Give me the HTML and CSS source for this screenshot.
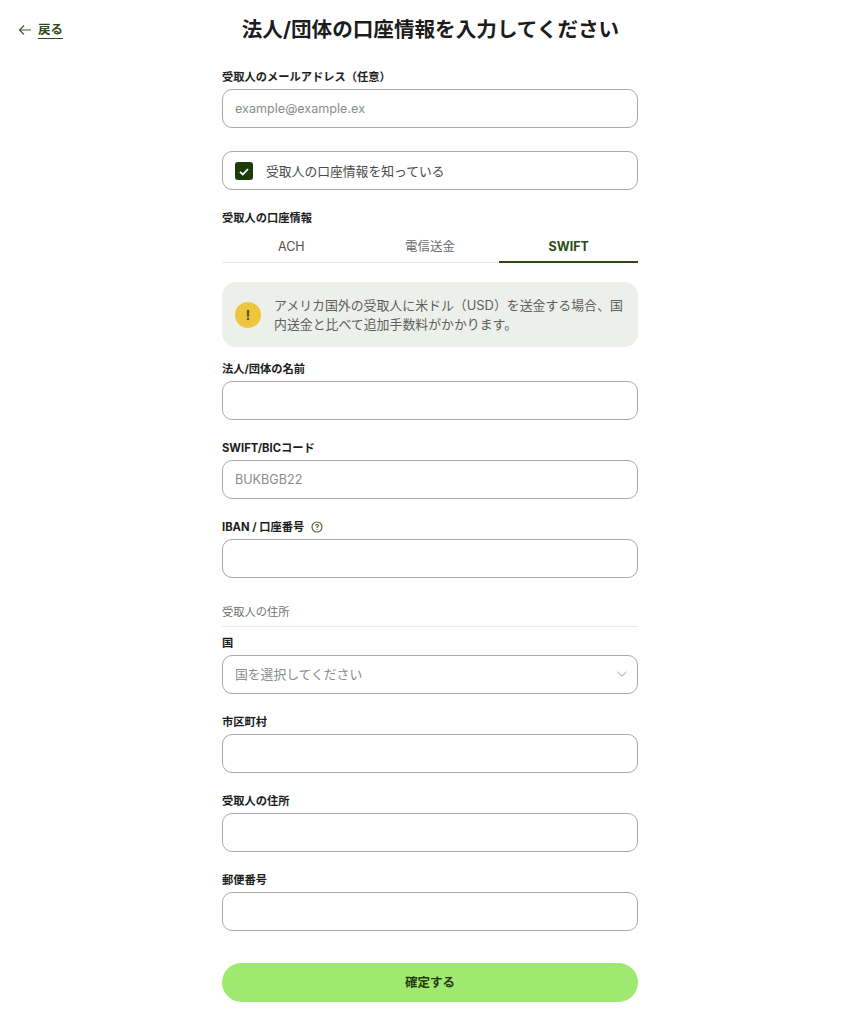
FILE: index.html
```html
<!DOCTYPE html>
<html lang="ja">
<head>
<meta charset="utf-8">
<title>法人/団体の口座情報を入力してください</title>
<link rel="stylesheet" href="styles.css">
</head>
<body>
<header class="top">
  <a class="back" href="#">
    <svg class="back-icon" viewBox="0 0 14 12" width="14" height="12" aria-hidden="true"><path d="M13 6H1.5M6 1.5 1.5 6 6 10.5" fill="none" stroke="#3f5f2a" stroke-width="1.2"/></svg>
    <span class="back-text">戻る</span>
  </a>
  <h1 class="title">法人/団体の口座情報を入力してください</h1>
</header>
<main class="form">
  <div class="field field-email">
    <div class="label">受取人のメールアドレス（任意）</div>
    <div class="input placeholder">example@example.ex</div>
  </div>
  <div class="check-box">
    <span class="check"><svg viewBox="0 0 18 18" width="18" height="18" aria-hidden="true"><path d="M5 9.8 7.8 12.5 13 7" fill="none" stroke="#fff" stroke-width="1.8"/></svg></span>
    <span class="check-text">受取人の口座情報を知っている</span>
  </div>
  <div class="label label-tabs">受取人の口座情報</div>
  <div class="tabs">
    <div class="tab">ACH</div>
    <div class="tab tab-muted">電信送金</div>
    <div class="tab tab-active">SWIFT</div>
  </div>
  <div class="notice">
    <span class="notice-icon">!</span>
    <p class="notice-text">アメリカ国外の受取人に米ドル（USD）を送金する場合、国内送金と比べて追加手数料がかかります。</p>
  </div>
  <div class="field">
    <div class="label">法人/団体の名前</div>
    <div class="input"></div>
  </div>
  <div class="field">
    <div class="label">SWIFT/BICコード</div>
    <div class="input placeholder">BUKBGB22</div>
  </div>
  <div class="field field-iban">
    <div class="label">IBAN / 口座番号
      <svg class="help" viewBox="0 0 12 12" width="12" height="12" aria-hidden="true"><circle cx="6" cy="6" r="5" fill="none" stroke="#3f5f2a" stroke-width="1.1"/><path d="M4.6 4.8c0-.8.6-1.3 1.4-1.3s1.4.5 1.4 1.2c0 1.1-1.4 1.1-1.4 2.2" fill="none" stroke="#3f5f2a" stroke-width="1.1"/><circle cx="6" cy="8.6" r=".65" fill="#3f5f2a"/></svg>
    </div>
    <div class="input"></div>
  </div>
  <div class="section">受取人の住所</div>
  <div class="field">
    <div class="label">国</div>
    <div class="input placeholder select">
      <span>国を選択してください</span>
      <svg viewBox="0 0 10 6" width="10" height="6" aria-hidden="true"><path d="M.5 .8 5 5.2 9.5 .8" fill="none" stroke="#9a9d98" stroke-width="1"/></svg>
    </div>
  </div>
  <div class="field">
    <div class="label">市区町村</div>
    <div class="input"></div>
  </div>
  <div class="field">
    <div class="label">受取人の住所</div>
    <div class="input"></div>
  </div>
  <div class="field">
    <div class="label">郵便番号</div>
    <div class="input"></div>
  </div>
  <button class="submit" type="button">確定する</button>
</main>
</body>
</html>
```
FILE: styles.css
```css
* { box-sizing: border-box; }
html, body { margin: 0; padding: 0; }
body {
  background: #fff;
  color: #1c1c1c;
  font-family: Inter, "Noto Sans CJK JP", sans-serif;
  height: 1024px;
  overflow: hidden;
}
.top {
  position: relative;
  height: 68px;
  padding-top: 16px;
  padding-right: 4px;
}
.back {
  position: absolute;
  left: 18px;
  top: 21px;
  display: flex;
  align-items: flex-start;
  gap: 6px;
  text-decoration: none;
  color: #2c4a17;
}
.back-icon { margin-top: 3px; }
.back-text {
  font-size: 12.5px;
  font-weight: 700;
  line-height: 17px;
  border-bottom: 1.5px solid #2c4a17;
}
.title {
  margin: 0;
  text-align: center;
  font-size: 20.6px;
  line-height: 28px;
  font-weight: 700;
}
.form {
  width: 416px;
  margin-left: 222px;
  display: flex;
  flex-direction: column;
}
.field { margin-bottom: 19px; }
.field-email { margin-bottom: 23px; }
.field-iban { margin-bottom: 25px; }
.label {
  font-size: 11.25px;
  font-weight: 700;
  line-height: 16px;
  height: 16px;
  color: #1c1c1c;
  display: flex;
  align-items: center;
  gap: 7px;
}
.field .label {
  height: 17px;
  padding-top: 1px;
  margin-bottom: 4px;
}
.input {
  height: 39px;
  border: 1px solid #a9aaa8;
  border-radius: 10px;
  padding: 0 12px;
  display: flex;
  align-items: center;
  font-size: 12.6px;
}
.placeholder { color: #8a8d88; }
.check-box {
  height: 39px;
  border: 1px solid #a9aaa8;
  border-radius: 10px;
  padding: 0 12px;
  display: flex;
  align-items: center;
  gap: 13px;
  margin-bottom: 20px;
}
.check {
  width: 18px;
  height: 18px;
  border-radius: 3px;
  background: #1c3a0a;
  display: block;
}
.check svg { display: block; }
.check-text {
  font-size: 12.8px;
  color: #4a4a4a;
}
.label-tabs { margin-bottom: 9px; }
.tabs {
  display: grid;
  grid-template-columns: repeat(3, 1fr);
  border-bottom: 1px solid #e8e9e7;
  height: 28px;
  margin-bottom: 19px;
}
.tab {
  text-align: center;
  font-size: 12.5px;
  line-height: 23px;
  color: #4f4f4f;
  height: 28px;
}
.tab-muted { color: #6b6b6b; }
.tab-active {
  color: #2c4a17;
  font-weight: 700;
  border-bottom: 2px solid #2c4a17;
}
.notice {
  background: #ecefea;
  border-radius: 14px;
  height: 65px;
  padding: 0 13px;
  display: flex;
  align-items: center;
  gap: 13px;
  margin-bottom: 13px;
}
.notice-icon {
  flex: none;
  width: 26px;
  height: 26px;
  border-radius: 50%;
  background: #edc63f;
  color: #5a4a10;
  font-size: 13px;
  font-weight: 700;
  text-align: center;
  line-height: 26px;
}
.notice-text {
  margin: 0;
  font-size: 12.9px;
  line-height: 19px;
  color: #5c5f5a;
}
.section {
  font-size: 11.25px;
  line-height: 16px;
  color: #6f6f6f;
  padding-top: 1px;
  padding-bottom: 6px;
  border-bottom: 1px solid #e8e9e7;
  margin-bottom: 7px;
}
.select {
  justify-content: space-between;
  padding-right: 10px;
  padding-bottom: 2px;
  font-size: 12.8px;
}
.submit {
  height: 39px;
  margin-top: 13px;
  padding-bottom: 3px;
  border: 0;
  border-radius: 20px;
  background: #a0e971;
  color: #233a10;
  font-family: inherit;
  font-size: 12.5px;
  font-weight: 700;
}
```
